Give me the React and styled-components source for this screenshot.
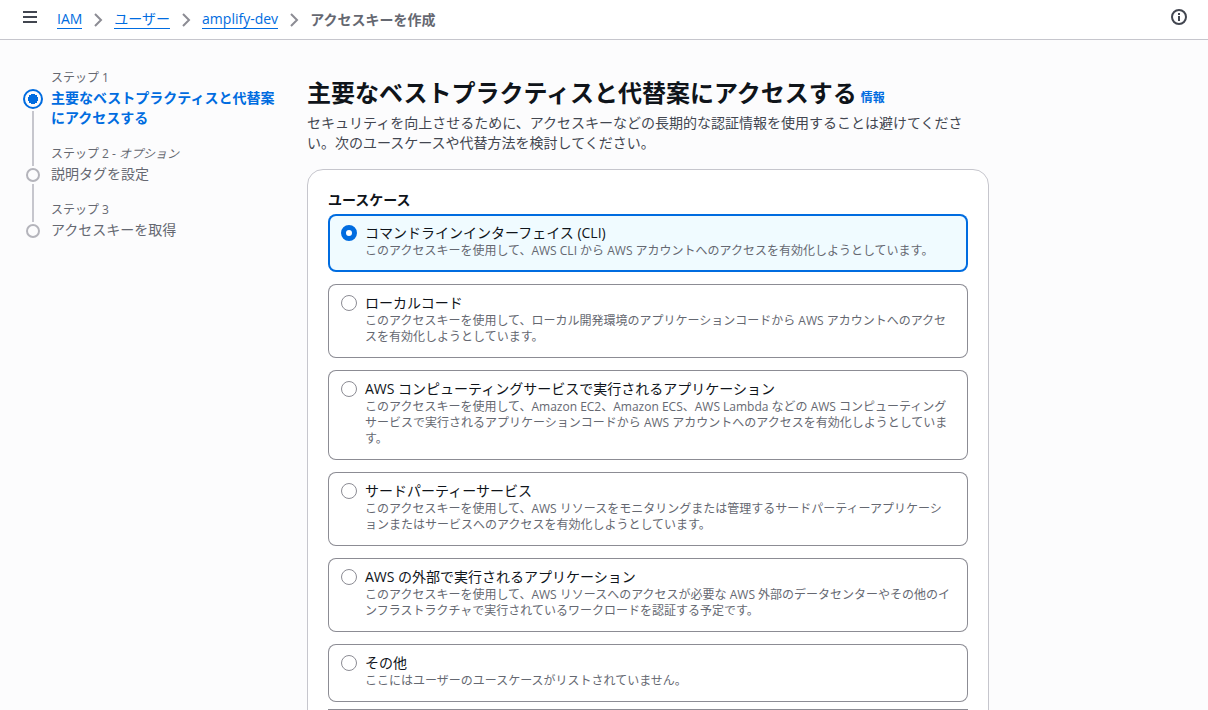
import React, { useState } from "react";
import styled, { createGlobalStyle } from "styled-components";

const GlobalStyle = createGlobalStyle`
  *, *::before, *::after { box-sizing: border-box; }
  body {
    margin: 0;
    background: #fcfcfd;
    color: #0f141a;
    font-family: "Open Sans", "Noto Sans CJK JP", sans-serif;
    font-size: 14px;
    line-height: 20px;
  }
`;

const Page = styled.div`
  min-height: 100vh;
`;

const TopBar = styled.header`
  display: flex;
  align-items: center;
  justify-content: space-between;
  height: 40px;
  padding: 0 19px 0 20px;
  background: #ffffff;
  border-bottom: 1px solid #c6c6cd;
`;

const TopBarGroup = styled.div`
  display: flex;
  align-items: center;
  gap: 17px;
`;

const IconButton = styled.button`
  display: flex;
  width: 20px;
  height: 20px;
  padding: 2px;
  margin-bottom: 5px;
  border: 0;
  background: none;
  color: #424650;
  cursor: pointer;
`;

const Crumbs = styled.ol`
  display: flex;
  align-items: center;
  margin: 0;
  padding: 0;
  line-height: 18px;
  list-style: none;
`;

const Crumb = styled.li`
  display: flex;
  align-items: center;
  color: #656871;
  font-weight: ${(p) => (p.$current ? 700 : 400)};
`;

const Link = styled.a`
  color: #006ce0;
  text-decoration: none;
`;

const CrumbLink = styled(Link)`
  border-bottom: 1px solid currentColor;
`;

const Separator = styled.svg`
  width: 16px;
  height: 16px;
  margin: 0 8px;
  color: #8c8c94;
`;

const Layout = styled.div`
  display: grid;
  grid-template-columns: 284px minmax(0, 7fr) minmax(0, 2fr);
  padding: 29px 24px 0 23px;
`;

const Steps = styled.ol`
  margin: 0;
  padding: 0 32px 0 0;
  list-style: none;
`;

const Step = styled.li`
  display: flex;
  gap: 8px;
`;

const Rail = styled.div`
  display: flex;
  flex: none;
  flex-direction: column;
  align-items: center;
  width: 20px;
`;

const RailLine = styled.span`
  width: 2px;
  height: ${(p) => (p.$grow ? "0" : "21px")};
  flex: ${(p) => (p.$grow ? "1 0 auto" : "none")};
  background: ${(p) => (p.$hidden ? "transparent" : "#c6c6cd")};
`;

const Marker = styled.span`
  flex: none;
  width: 14px;
  height: 14px;
  margin: 2px 0;
  border: 2px solid #b4b4bb;
  border-radius: 50%;
`;

const CurrentMarker = styled(Marker)`
  width: 20px;
  height: 20px;
  margin: -1px 0 2px;
  border-color: #006ce0;
  background: radial-gradient(circle, #006ce0 5px, transparent 5px);
`;

const StepText = styled.div`
  padding-bottom: ${(p) => (p.$last ? 0 : 17)}px;
`;

const StepLabel = styled.div`
  padding: 1px 0 2px;
  color: #656871;
  font-size: 12px;
  line-height: 16px;
`;

const StepTitle = styled.div`
  color: ${(p) => (p.$current ? "#006ce0" : "#656871")};
  font-weight: ${(p) => (p.$current ? 700 : 400)};
`;

const Main = styled.main`
  padding-top: 9px;
`;

const Heading = styled.div`
  display: flex;
  align-items: baseline;
  gap: 4px;
`;

const Title = styled.h1`
  margin: 0;
  font-size: 24px;
  font-weight: 700;
  line-height: 30px;
`;

const InfoLink = styled(Link)`
  font-size: 12px;
  font-weight: 700;
  line-height: 16px;
  white-space: nowrap;
`;

const Description = styled.p`
  margin: 5px 0 16px;
  padding-right: 20px;
  color: #424650;
`;

const Card = styled.section`
  padding: 20px;
  border: 1px solid #c6c6cd;
  border-radius: 16px;
  background: #ffffff;
`;

const Fieldset = styled.fieldset`
  display: grid;
  gap: 12px;
  min-width: 0;
  margin: 0;
  padding: 0;
  border: 0;
`;

const Legend = styled.legend`
  padding: 0 0 4px;
  font-weight: 700;
`;

const Tile = styled.label`
  display: flex;
  gap: 8px;
  padding: 9px 15px 13px 12px;
  border-radius: 8px;
  background: ${(p) => (p.$selected ? "#f0fbff" : "#ffffff")};
  box-shadow: inset 0 0 0 ${(p) => (p.$selected ? "2px #006ce0" : "1px #8c8c94")};
  cursor: pointer;
`;

const Radio = styled.input`
  appearance: none;
  flex: none;
  width: 16px;
  height: 16px;
  margin: 2px 0 0 1px;
  border: 1px solid #8c8c94;
  border-radius: 50%;
  background: #ffffff;
  &:checked { border: 5px solid #006ce0; }
`;

const TileTitle = styled.span`
  display: block;
`;

const TileText = styled.span`
  display: block;
  color: #656871;
  font-size: 12px;
  line-height: 16px;
`;

const Divider = styled.hr`
  height: 1px;
  margin: 7px 0 20px;
  border: 0;
  background: #8c8c94;
`;

const steps = [
  { label: "ステップ 1", title: "主要なベストプラクティスと代替案にアクセスする" },
  { label: "ステップ 2", optional: true, title: "説明タグを設定" },
  { label: "ステップ 3", title: "アクセスキーを取得" },
];

const useCases = [
  {
    id: "cli",
    title: "コマンドラインインターフェイス (CLI)",
    text: "このアクセスキーを使用して、AWS CLI から AWS アカウントへのアクセスを有効化しようとしています。",
  },
  {
    id: "local",
    title: "ローカルコード",
    text: "このアクセスキーを使用して、ローカル開発環境のアプリケーションコードから AWS アカウントへのアクセスを有効化しようとしています。",
  },
  {
    id: "compute",
    title: "AWS コンピューティングサービスで実行されるアプリケーション",
    text: "このアクセスキーを使用して、Amazon EC2、Amazon ECS、AWS Lambda などの AWS コンピューティングサービスで実行されるアプリケーションコードから AWS アカウントへのアクセスを有効化しようとしています。",
  },
  {
    id: "third-party",
    title: "サードパーティーサービス",
    text: "このアクセスキーを使用して、AWS リソースをモニタリングまたは管理するサードパーティーアプリケーションまたはサービスへのアクセスを有効化しようとしています。",
  },
  {
    id: "outside",
    title: "AWS の外部で実行されるアプリケーション",
    text: "このアクセスキーを使用して、AWS リソースへのアクセスが必要な AWS 外部のデータセンターやその他のインフラストラクチャで実行されているワークロードを認証する予定です。",
  },
  {
    id: "other",
    title: "その他",
    text: "ここにはユーザーのユースケースがリストされていません。",
  },
];

const crumbs = ["IAM", "ユーザー", "amplify-dev"];

function Chevron() {
  return (
    <Separator viewBox="0 0 16 16" fill="none" stroke="currentColor" strokeWidth="2" aria-hidden="true">
      <path d="M5 2l6 6-6 6" />
    </Separator>
  );
}

export default function App() {
  const [selected, setSelected] = useState("cli");

  return (
    <Page lang="ja">
      <GlobalStyle />
      <TopBar>
        <TopBarGroup>
          <IconButton type="button" aria-label="メニュー">
            <svg width="16" height="16" viewBox="0 0 16 16" fill="none" stroke="currentColor" strokeWidth="2" aria-hidden="true">
              <path d="M1 3h14M1 8h14M1 13h14" />
            </svg>
          </IconButton>
          <nav aria-label="パンくず">
            <Crumbs>
              {crumbs.map((name) => (
                <Crumb key={name}>
                  <CrumbLink href="#">{name}</CrumbLink>
                  <Chevron />
                </Crumb>
              ))}
              <Crumb $current aria-current="page">アクセスキーを作成</Crumb>
            </Crumbs>
          </nav>
        </TopBarGroup>
        <IconButton type="button" aria-label="情報">
          <svg width="16" height="16" viewBox="0 0 16 16" fill="none" stroke="currentColor" strokeWidth="2" aria-hidden="true">
            <circle cx="8" cy="8" r="7" />
            <path d="M8 7v5M8 4v2" />
          </svg>
        </IconButton>
      </TopBar>
      <Layout>
        <Steps>
          {steps.map((step, i) => (
            <Step key={step.label} aria-current={i === 0 ? "step" : undefined}>
              <Rail>
                <RailLine $hidden={i === 0} />
                {i === 0 ? <CurrentMarker /> : <Marker />}
                {i < steps.length - 1 && <RailLine $grow />}
              </Rail>
              <StepText $last={i === steps.length - 1}>
                <StepLabel>
                  {step.label}
                  {step.optional && <> - <i>オプション</i></>}
                </StepLabel>
                <StepTitle $current={i === 0}>{step.title}</StepTitle>
              </StepText>
            </Step>
          ))}
        </Steps>
        <Main>
          <Heading>
            <Title>主要なベストプラクティスと代替案にアクセスする</Title>
            <InfoLink href="#">情報</InfoLink>
          </Heading>
          <Description>
            セキュリティを向上させるために、アクセスキーなどの長期的な認証情報を使用することは避けてください。次のユースケースや代替方法を検討してください。
          </Description>
          <Card>
            <Fieldset>
              <Legend>ユースケース</Legend>
              {useCases.map((item) => (
                <Tile key={item.id} $selected={selected === item.id}>
                  <Radio
                    type="radio"
                    name="use-case"
                    value={item.id}
                    checked={selected === item.id}
                    onChange={() => setSelected(item.id)}
                  />
                  <span>
                    <TileTitle>{item.title}</TileTitle>
                    <TileText>{item.text}</TileText>
                  </span>
                </Tile>
              ))}
            </Fieldset>
            <Divider />
          </Card>
        </Main>
      </Layout>
    </Page>
  );
}
